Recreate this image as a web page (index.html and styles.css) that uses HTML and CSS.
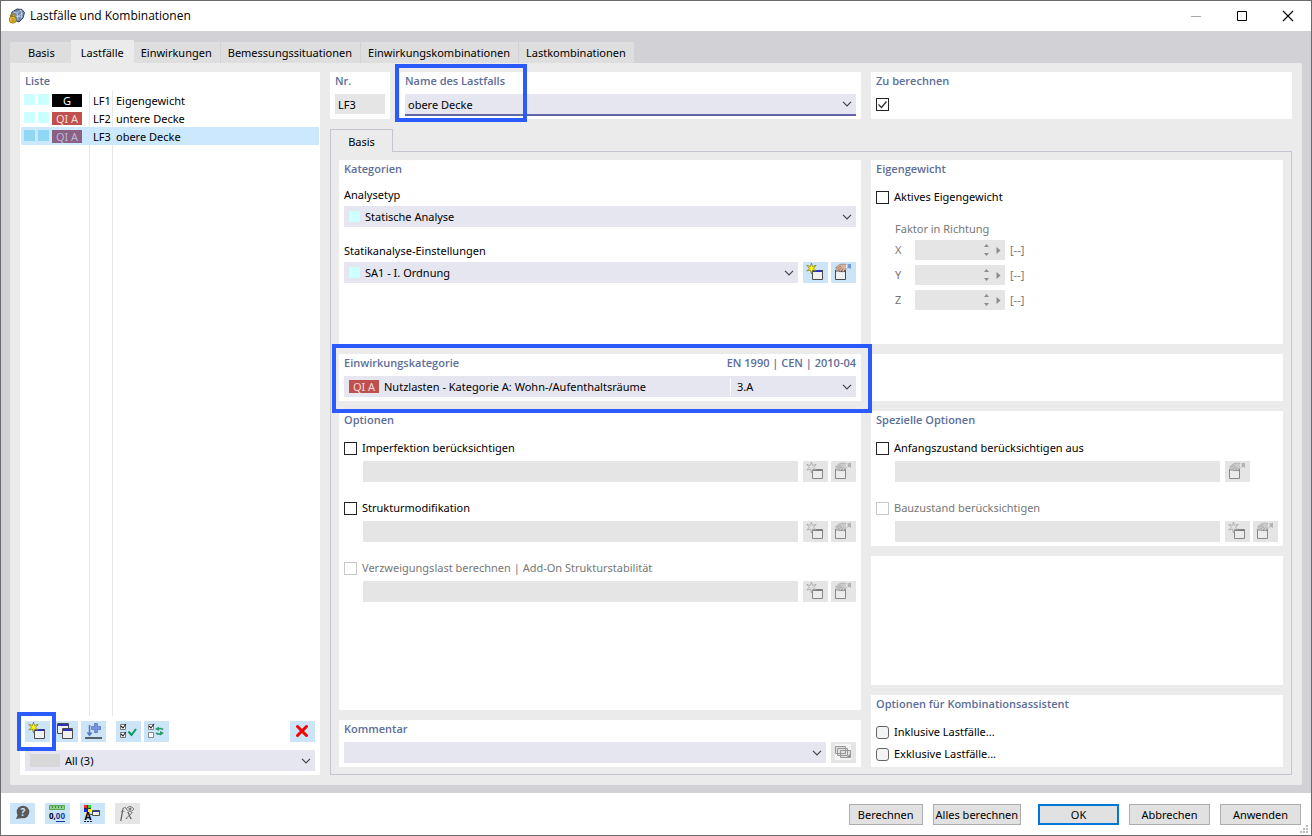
FILE: index.html
```html
<!DOCTYPE html>
<html lang="de">
<head>
    <meta charset="UTF-8">
    <meta name="viewport" content="width=device-width, initial-scale=1.0">
    <title>Lastfälle und Kombinationen</title>
    <link rel="stylesheet" href="styles.css">
</head>
<body>
    <!-- Shared icons -->
    <svg class="sprite" aria-hidden="true">
        <symbol id="i-chevron" viewBox="0 0 10 6"><path d="M1 .8l4 4 4-4" fill="none" stroke="#444" stroke-width="1.2"/></symbol>
        <symbol id="i-new" viewBox="0 0 25 21">
            <path d="M9.500 8.500h10v9h-10z" fill="#f0f0f0" stroke="#4a4a4a"/>
            <path d="M10 8h9v2h-9z" fill="#2c35b5"/>
            <path d="M9 8h1v2H9zM19 8h1v2h-1z" fill="#4a4a4a"/>
            <path d="M8.500 1l1 3.500 3.700-1.200-2.500 3 2.500 2.700-3.700-.9-1 3.900-1.100-3.900-3.600.9L6.300 6.300 3.800 3.300l3.600 1.200z" fill="#fff200" stroke="#77771c" stroke-width=".7"/>
        </symbol>
        <symbol id="i-edit" viewBox="0 0 25 21">
            <path d="M4.500 8.500h10v9h-10z" fill="#f0f0f0" stroke="#4a4a4a"/>
            <path d="M4 8h11v2H4z" fill="#4a4a4a"/>
            <path d="M5 8.500h3v1H5z" fill="#fff"/>
            <path d="M4.500 6L7 3.500l3-1.300h4l2 .8v3.500L14 7.500l-1 2-1.500.5L11 8l-1.500 1.800L8 9V7.500L6 8.500l-1-1 1.500-1.500z" fill="#d9b49b" stroke="#8a6a58" stroke-width=".6"/>
            <path d="M7 5.500L10 4.500M8 7.500l3-1.500M11 8l1.500-1.500" stroke="#8a6a58" stroke-width=".7"/>
            <path d="M15.500 2.500L20 1.800v5.200l-1.500-1-3 .5z" fill="#6f9ad3"/>
            <path d="M15 2.500h1.500v4H15z" fill="#e9f0fa"/>
        </symbol>
        <symbol id="i-spin" viewBox="0 0 20 20"><path d="M4.500 4L7 7H2zM4.500 16L7 13H2zM14.500 7l4 3.500-4 3.500z" fill="#8c8c8c"/></symbol>
    </svg>

    <div class="window">
        <header class="titlebar">
            <svg class="app-icon" viewBox="0 0 16 16" aria-hidden="true">
                <path d="M3 4l5-3 5 .5 2.500 3L14 10l-4 4-5-2-3-4z" fill="#6d86ad" stroke="#33445f"/>
                <path d="M4 4l4 1 4-3M8 5l1 7M9 8l5-3M4 7l4 1.500 5 .5M12 2l1 8" fill="none" stroke="#d3deed" stroke-width=".8"/>
                <path d="M1.500 9V7.500q2-3 4.500 0V9" fill="none" stroke="#a88511" stroke-width="1.300"/>
                <rect x=".5" y="8.500" width="6.500" height="6.500" rx="2.500" fill="#e7bd33" stroke="#8d6d10" stroke-width=".8"/>
                <path d="M2.500 11h3M2.500 13h3" stroke="#8d6d10" stroke-width=".8"/>
            </svg>
            <h1>Lastfälle und Kombinationen</h1>
            <div class="window-buttons">
                <button type="button" aria-label="Minimieren" disabled><svg viewBox="0 0 12 12"><path d="M1 6.500h10" stroke="#aaa"/></svg></button>
                <button type="button" aria-label="Maximieren"><svg viewBox="0 0 12 12"><path d="M1.500 1.500h9v9h-9z" fill="none" stroke="#000"/></svg></button>
                <button type="button" aria-label="Schließen"><svg viewBox="0 0 12 12"><path d="M1 1l10 10M11 1L1 11" stroke="#000" stroke-width="1.100"/></svg></button>
            </div>
        </header>

        <div class="workspace">
            <nav class="tabs" role="tablist">
                <button type="button" role="tab">Basis</button>
                <button type="button" role="tab" class="active" aria-selected="true">Lastfälle</button>
                <button type="button" role="tab">Einwirkungen</button>
                <button type="button" role="tab">Bemessungssituationen</button>
                <button type="button" role="tab">Einwirkungskombinationen</button>
                <button type="button" role="tab">Lastkombinationen</button>
            </nav>

            <div class="page">
                <!-- Load case list -->
                <section class="panel list-panel">
                    <h2>Liste</h2>
                    <div class="list-area">
                        <table class="list">
                            <tr>
                                <td class="marks"><div><i class="swatch"></i><i class="swatch"></i><span class="badge black">G</span></div></td>
                                <td class="number">LF1</td>
                                <td>Eigengewicht</td>
                            </tr>
                            <tr>
                                <td class="marks"><div><i class="swatch"></i><i class="swatch"></i><span class="badge">QI A</span></div></td>
                                <td class="number">LF2</td>
                                <td>untere Decke</td>
                            </tr>
                            <tr class="selected">
                                <td class="marks"><div><i class="swatch"></i><i class="swatch"></i><span class="badge">QI A</span></div></td>
                                <td class="number">LF3</td>
                                <td>obere Decke</td>
                            </tr>
                        </table>
                    </div>
                    <div class="list-tools">
                        <div class="marked mark-new">
                            <button type="button" class="tool" aria-label="Neu"><svg><use href="#i-new"/></svg></button>
                        </div>
                        <button type="button" class="tool" aria-label="Kopieren">
                            <svg viewBox="0 0 25 21"><path d="M4.500 2.500h11v10h-11z" fill="#f0f0f0" stroke="#4a4a4a"/><path d="M5 3h10v2H5z" fill="#2c35b5"/><path d="M9.500 7.500h10v10h-10z" fill="#f0f0f0" stroke="#4a4a4a"/><path d="M10 8h9v2h-9z" fill="#2c35b5"/></svg>
                        </button>
                        <button type="button" class="tool" aria-label="Importieren">
                            <svg viewBox="0 0 25 21"><path d="M4 17h17" stroke="#333" stroke-width="1.500"/><path d="M8.500 4v9" stroke="#5278bd" stroke-width="1.500"/><path d="M5.500 11.500h6l-3 4z" fill="#5278bd"/><path d="M13.500 2.500h3v3h3v3h-3v3h-3v-3h-3v-3h3z" fill="#7793df" stroke="#506dbd" stroke-width=".7"/></svg>
                        </button>
                        <button type="button" class="tool spaced" aria-label="Alle auswählen">
                            <svg viewBox="0 0 25 21"><path d="M4.500 3.500h5v5h-5zM4.500 11.500h5v5h-5z" fill="#fff" stroke="#777"/><path d="M5 5l2 2 3-4M5 13l2 2 3-4" fill="none" stroke="#222" stroke-width="1.100"/><path d="M12.500 10.500l3 3.500 4.500-6" fill="none" stroke="#079c53" stroke-width="2"/></svg>
                        </button>
                        <button type="button" class="tool" aria-label="Auswahl umkehren">
                            <svg viewBox="0 0 25 21"><path d="M4.500 3.500h5v5h-5zM4.500 11.500h5v5h-5z" fill="#fff" stroke="#888"/><path d="M5 5l2 2 3-4" fill="none" stroke="#222" stroke-width="1.100"/><path d="M19 8.500q-3-2-5.500 0M12 12q3 2 5.500.5" fill="none" stroke="#269b68" stroke-width="1.700"/><path d="M11 8l4-2.500v4.500zM20 12l-4-2v4.500z" fill="#269b68"/></svg>
                        </button>
                        <button type="button" class="tool delete" aria-label="Löschen">
                            <svg viewBox="0 0 25 21"><path d="M7.500 5.500l9 9M16.500 5.500l-9 9" stroke="#f40000" stroke-width="3" stroke-linecap="round"/></svg>
                        </button>
                    </div>
                    <div class="combo">
                        <i class="blank"></i>
                        <select aria-label="Filter"><option>All (3)</option></select>
                        <svg class="chevron"><use href="#i-chevron"/></svg>
                    </div>
                </section>

                <main class="details">
                    <div class="top-row">
                        <section class="panel">
                            <h2><label for="nr">Nr.</label></h2>
                            <input id="nr" class="field number-field" value="LF3" readonly>
                        </section>
                        <section class="panel">
                            <div class="marked mark-name"><h2><label for="name">Name des Lastfalls</label></h2></div>
                            <div class="combo focused">
                                <input id="name" value="obere Decke">
                                <svg class="chevron"><use href="#i-chevron"/></svg>
                            </div>
                        </section>
                        <section class="panel">
                            <h2>Zu berechnen</h2>
                            <div class="check"><input type="checkbox" aria-label="Zu berechnen" checked></div>
                        </section>
                    </div>

                    <button type="button" role="tab" class="sub-tab">Basis</button>
                    <div class="sub-page">
                        <div class="column">
                            <section class="panel categories">
                                <h2>Kategorien</h2>
                                <label class="caption" for="type">Analysetyp</label>
                                <div class="combo">
                                    <i class="swatch"></i>
                                    <select id="type"><option>Statische Analyse</option></select>
                                    <svg class="chevron"><use href="#i-chevron"/></svg>
                                </div>
                                <label class="caption second" for="settings">Statikanalyse-Einstellungen</label>
                                <div class="field-row">
                                    <div class="combo">
                                        <i class="swatch"></i>
                                        <select id="settings"><option>SA1 - I. Ordnung</option></select>
                                        <svg class="chevron"><use href="#i-chevron"/></svg>
                                    </div>
                                    <button type="button" class="tool" aria-label="Neu"><svg><use href="#i-new"/></svg></button>
                                    <button type="button" class="tool" aria-label="Bearbeiten"><svg><use href="#i-edit"/></svg></button>
                                </div>
                            </section>

                            <section class="panel short marked mark-action">
                                <h2 class="split"><label for="action">Einwirkungskategorie</label><span>EN 1990 | CEN | 2010-04</span></h2>
                                <div class="combo">
                                    <span class="badge">QI A</span>
                                    <select id="action"><option>Nutzlasten - Kategorie A: Wohn-/Aufenthaltsräume</option></select>
                                    <span class="code">3.A</span>
                                    <svg class="chevron"><use href="#i-chevron"/></svg>
                                </div>
                            </section>

                            <section class="panel grow">
                                <h2>Optionen</h2>
                                <div class="option">
                                    <label class="check"><input type="checkbox">Imperfektion berücksichtigen</label>
                                    <div class="field-row">
                                        <input class="field" aria-label="Imperfektion" disabled>
                                        <button type="button" class="tool" aria-label="Neu" disabled><svg><use href="#i-new"/></svg></button>
                                        <button type="button" class="tool" aria-label="Bearbeiten" disabled><svg><use href="#i-edit"/></svg></button>
                                    </div>
                                </div>
                                <div class="option">
                                    <label class="check"><input type="checkbox">Strukturmodifikation</label>
                                    <div class="field-row">
                                        <input class="field" aria-label="Strukturmodifikation" disabled>
                                        <button type="button" class="tool" aria-label="Neu" disabled><svg><use href="#i-new"/></svg></button>
                                        <button type="button" class="tool" aria-label="Bearbeiten" disabled><svg><use href="#i-edit"/></svg></button>
                                    </div>
                                </div>
                                <div class="option">
                                    <label class="check muted"><input type="checkbox" disabled>Verzweigungslast berechnen | Add-On Strukturstabilität</label>
                                    <div class="field-row">
                                        <input class="field" aria-label="Verzweigungslast" disabled>
                                        <button type="button" class="tool" aria-label="Neu" disabled><svg><use href="#i-new"/></svg></button>
                                        <button type="button" class="tool" aria-label="Bearbeiten" disabled><svg><use href="#i-edit"/></svg></button>
                                    </div>
                                </div>
                            </section>

                            <section class="panel">
                                <h2><label for="comment">Kommentar</label></h2>
                                <div class="field-row">
                                    <div class="combo">
                                        <input id="comment">
                                        <svg class="chevron"><use href="#i-chevron"/></svg>
                                    </div>
                                    <button type="button" class="tool" aria-label="Kommentare" disabled>
                                        <svg viewBox="0 0 25 21"><path d="M4 2h16v16H4z" fill="#fff"/><path d="M4.500 4.500h10v7h-10zM6.500 6.500h10v7h-10zM9.500 8.500h10v7h-10z" fill="#ddd" stroke="#666"/><path d="M16 15l3-3v3z" fill="#555"/></svg>
                                    </button>
                                </div>
                            </section>
                        </div>

                        <div class="column">
                            <section class="panel categories">
                                <h2>Eigengewicht</h2>
                                <label class="check first"><input type="checkbox">Aktives Eigengewicht</label>
                                <div class="factors">
                                    <p>Faktor in Richtung</p>
                                    <div class="factor"><label for="fx">X</label><span class="spinner"><input id="fx" disabled><svg><use href="#i-spin"/></svg></span><span>[--]</span></div>
                                    <div class="factor"><label for="fy">Y</label><span class="spinner"><input id="fy" disabled><svg><use href="#i-spin"/></svg></span><span>[--]</span></div>
                                    <div class="factor"><label for="fz">Z</label><span class="spinner"><input id="fz" disabled><svg><use href="#i-spin"/></svg></span><span>[--]</span></div>
                                </div>
                            </section>

                            <section class="panel short"></section>

                            <section class="panel">
                                <h2>Spezielle Optionen</h2>
                                <div class="option">
                                    <label class="check"><input type="checkbox">Anfangszustand berücksichtigen aus</label>
                                    <div class="field-row">
                                        <input class="field" aria-label="Anfangszustand" disabled>
                                        <button type="button" class="tool" aria-label="Bearbeiten" disabled><svg><use href="#i-edit"/></svg></button>
                                        <i class="tool-gap"></i>
                                    </div>
                                </div>
                                <div class="option">
                                    <label class="check muted"><input type="checkbox" disabled>Bauzustand berücksichtigen</label>
                                    <div class="field-row">
                                        <input class="field" aria-label="Bauzustand" disabled>
                                        <button type="button" class="tool" aria-label="Neu" disabled><svg><use href="#i-new"/></svg></button>
                                        <button type="button" class="tool" aria-label="Bearbeiten" disabled><svg><use href="#i-edit"/></svg></button>
                                    </div>
                                </div>
                            </section>

                            <section class="panel grow"></section>

                            <section class="panel">
                                <h2>Optionen für Kombinationsassistent</h2>
                                <div class="assistant">
                                    <label class="check round"><input type="checkbox">Inklusive Lastfälle...</label>
                                    <label class="check round"><input type="checkbox">Exklusive Lastfälle...</label>
                                </div>
                            </section>
                        </div>
                    </div>
                </main>
            </div>
        </div>

        <footer class="footer">
            <button type="button" class="tool" aria-label="Hilfe">
                <svg viewBox="0 0 25 21"><circle cx="13" cy="9" r="6.300" fill="#595959"/><path d="M8 11l-2 5 6-1z" fill="#595959"/><text x="13" y="13" text-anchor="middle" class="icon-help">?</text></svg>
            </button>
            <button type="button" class="tool" aria-label="Einheiten und Dezimalstellen">
                <svg viewBox="0 0 25 21"><path d="M4.500 2.500h15v4h-15z" fill="#8fd18b" stroke="#58a858"/><path d="M7.500 3v2M10.500 3v2M13.500 3v2M16.500 3v2" stroke="#3f843f"/><text x="4" y="16" class="icon-digits">0,<tspan class="blue">00</tspan></text><path d="M11 18.500h9" stroke="#1d3a9d"/></svg>
            </button>
            <button type="button" class="tool" aria-label="Anzeige">
                <svg viewBox="0 0 25 21"><path d="M4 2h7v7H4z" fill="#333"/><path d="M4 2h3v3H4z" fill="#f22"/><path d="M8 2h3v3H8z" fill="#2d2"/><path d="M4 6h3v3H4z" fill="#22f"/><path d="M8 6h3v3H8z" fill="#ff0"/><text x="8" y="17" text-anchor="middle" class="icon-letter">A</text><path d="M4 18.500h8" stroke="#222" stroke-dasharray="2 1"/><path d="M12.500 7.500h7v5h-7z" fill="#f0f0f0" stroke="#4a4a4a"/><path d="M13 8h6v1h-6z" fill="#2c35b5"/><path d="M10 11.500h2" stroke="#555"/></svg>
            </button>
            <button type="button" class="tool" aria-label="Formel" disabled>
                <svg viewBox="0 0 25 21"><text x="5" y="15" class="icon-formula">f</text><text x="11" y="16" class="icon-formula">x</text><path d="M11 6q4-5 8 0-4 5-8 0z" fill="#eee" stroke="#333"/><circle cx="15" cy="6" r="1.500" fill="#333"/></svg>
            </button>
            <div class="actions">
                <button type="button">Berechnen</button>
                <button type="button" class="tight">Alles berechnen</button>
                <button type="button" class="wide primary">OK</button>
                <button type="button" class="wide">Abbrechen</button>
                <button type="button" class="wide">Anwenden</button>
            </div>
            <svg class="grip" viewBox="0 0 8 8" aria-hidden="true"><path d="M6 0h2v2H6zM3 3h2v2H3zM6 3h2v2H6zM0 6h2v2H0zM3 6h2v2H3zM6 6h2v2H6z" fill="#bbb"/></svg>
        </footer>
    </div>
</body>
</html>
```

FILE: styles.css
```css
* {
    margin: 0;
    padding: 0;
    box-sizing: border-box;
}
body {
    font-family: "Noto Sans", "Open Sans", sans-serif;
    font-size: 11px;
    line-height: 18px;
    color: #000;
    background: #fff;
}
button, input, select {
    font: inherit;
    color: inherit;
    border: none;
    border-radius: 0;
    background: none;
    appearance: none;
}
button {
    white-space: nowrap;
}
.sprite {
    display: none;
}
.window {
    display: flex;
    flex-direction: column;
    min-height: 100vh;
    border: 1px solid #6b6b6b;
}

/* Title bar */
.titlebar {
    display: flex;
    align-items: center;
    height: 30px;
    padding-left: 8px;
}
.app-icon {
    width: 16px;
    height: 16px;
    margin-right: 5px;
}
.titlebar h1 {
    font-family: "Open Sans", sans-serif;
    font-size: 12px;
    font-weight: normal;
}
.window-buttons {
    display: flex;
    margin-left: auto;
}
.window-buttons button {
    display: grid;
    place-items: center;
    width: 46px;
    height: 30px;
}
.window-buttons svg {
    width: 12px;
    height: 12px;
}

/* Main tabs */
.workspace {
    flex: 1;
    display: flex;
    flex-direction: column;
    padding: 9px 9px 8px;
    background: #d2d1d6;
}
.tabs {
    display: flex;
    align-items: flex-end;
}
.tabs button {
    height: 21px;
    padding: 0 8px 0 7px;
    background: #dedede;
    border-right: 1px solid #d2d1d6;
}
.tabs button:first-child {
    padding: 0 16px 0 18px;
    border: none;
}
.tabs button:last-child {
    border: none;
}
.tabs .active {
    height: 23px;
    padding: 2px 10px 0;
    background: #ebebeb;
    border: none;
}
.page {
    flex: 1;
    display: grid;
    grid-template-columns: 300px minmax(0, 1fr);
    gap: 10px;
    padding: 9px 10px 10px;
    background: #ebebeb;
}

/* Panels */
.panel {
    padding: 0 5px 4px;
    background: #fff;
}
.panel h2 {
    height: 18px;
    margin-bottom: 4px;
    font-family: "Open Sans", sans-serif;
    font-size: 11px;
    font-weight: 600;
    color: #5d6e98;
}
.panel .split {
    display: flex;
    justify-content: space-between;
}
.grow {
    flex: 1;
}
.short {
    min-height: 47px;
}

/* Blue frames around the steps of interest */
.marked {
    position: relative;
}
.marked::after {
    content: "";
    position: absolute;
    z-index: 2;
    box-sizing: border-box;
    border: 4px solid #2b5bff;
    pointer-events: none;
}
.mark-name::after {
    top: -8px;
    left: -10px;
    width: 132px;
    height: 58px;
}
.mark-action::after {
    inset: -10px -11px -12px -7px;
}
.mark-new::after {
    inset: -9px -6px -9px -8px;
}

/* List */
.list-panel {
    display: flex;
    flex-direction: column;
    padding: 0 5px 4px;
}
.list-panel h2 {
    margin-bottom: 1px;
}
.list-area {
    flex: 1;
    margin: 0 -4px 5px;
    background:
        linear-gradient(#e8e8e8, #e8e8e8) 68px 0 / 1px 100% no-repeat,
        linear-gradient(#e8e8e8, #e8e8e8) 91px 0 / 1px 100% no-repeat;
}
.list {
    width: 100%;
    border-collapse: collapse;
}
.list td {
    height: 18px;
    padding-left: 3px;
    padding-top: 1px;
    line-height: 17px;
}
.list .marks {
    width: 69px;
    padding: 0 0 0 3px;
}
.marks div {
    display: flex;
    gap: 3px;
}
.list .number {
    width: 23px;
}
.swatch {
    flex: none;
    width: 11px;
    height: 11px;
    background: #ccffff;
}
.badge {
    flex: none;
    width: 30px;
    height: 13px;
    line-height: 13px;
    text-align: center;
    color: #f3dddd;
    background: #c0504d;
}
.black {
    color: #fff;
    background: #000;
}
.selected {
    background: #cce8ff;
}
.selected .swatch {
    background: #90d6f5;
}
.selected .badge {
    color: #b5b8dc;
    background: #8b6080;
}
.list-tools {
    display: flex;
    gap: 3px;
    margin-bottom: 8px;
}
.list-tools .spaced {
    margin-left: 7px;
}
.list-tools .delete {
    margin-left: auto;
}
.blank {
    width: 30px;
    height: 13px;
    background: #d8d8d8;
}

/* Fields and buttons */
.tool {
    flex: none;
    display: block;
    width: 25px;
    height: 21px;
    background: #cce4f7;
}
.tool svg {
    display: block;
    width: 25px;
    height: 21px;
}
.tool:disabled {
    background: #e5e5e5;
}
.tool:disabled svg {
    filter: grayscale(1);
    opacity: 0.6;
}
.tool-gap {
    width: 25px;
}
.combo {
    flex: 1;
    display: flex;
    align-items: center;
    height: 21px;
    padding: 0 4px 0 5px;
    background: #e6e6f1;
}
.list-panel .combo {
    flex: none;
}
.combo select, .combo input {
    flex: 1;
    min-width: 0;
    height: 21px;
    padding-left: 5px;
    outline: none;
}
.combo input {
    padding-left: 0;
}
.combo .chevron {
    flex: none;
    width: 10px;
    height: 6px;
    pointer-events: none;
}
.focused {
    height: 22px;
    padding-left: 3px;
    border-bottom: 2px solid #6464aa;
}
.focused input {
    height: 20px;
}
.code {
    width: 112px;
    padding-left: 6px;
    border-left: 1px solid #fff;
}
.field {
    display: block;
    flex: 1;
    width: 100%;
    min-width: 0;
    height: 21px;
    background: #e5e5e5;
}
.number-field {
    height: 20px;
    padding: 1px 3px 0;
}
.field-row {
    display: flex;
    gap: 3px;
}
.field-row > :first-child {
    margin-right: 2px;
}
.check {
    display: flex;
    align-items: center;
    gap: 5px;
    height: 18px;
}
.check input {
    width: 13px;
    height: 13px;
    border: 1px solid #222;
    background: #fff;
}
.check input:checked {
    background: url("data:image/svg+xml,%3Csvg xmlns='http://www.w3.org/2000/svg' viewBox='0 0 11 11'%3E%3Cpath d='M1.5 5.500l3 3 5-6' fill='none' stroke='%23333' stroke-width='1.300'/%3E%3C/svg%3E") center no-repeat;
}
.check input:disabled {
    border-color: #c8c8c8;
}
.round input {
    border-color: #666;
    border-radius: 3px;
    background: #f3f3f3;
}
.muted {
    color: #777;
}

/* Load case details */
.details {
    display: flex;
    flex-direction: column;
}
.top-row {
    display: grid;
    grid-template-columns: 60px minmax(0, 1fr) 421px;
    gap: 10px;
    min-height: 47px;
}
.top-row .panel {
    padding-bottom: 3px;
}
.top-row .check {
    height: 20px;
}
.sub-tab {
    z-index: 1;
    width: 63px;
    height: 23px;
    margin: 10px 0 -1px;
    padding-top: 2px;
    border: 1px solid #c5c4d0;
    border-bottom: none;
    background: #ebebeb;
}
.sub-page {
    flex: 1;
    display: grid;
    grid-template-columns: minmax(0, 1fr) 412px;
    gap: 10px;
    padding: 8px 8px 7px;
    border: 1px solid #c5c4d0;
}
.column {
    display: flex;
    flex-direction: column;
    gap: 10px;
}
.categories {
    min-height: 184px;
}
.caption {
    display: block;
    margin: 8px 0 2px;
}
.categories h2 {
    margin-bottom: 8px;
}
.second {
    margin-top: 15px;
}
.option {
    margin-top: 17px;
}
h2 + .option {
    margin-top: 10px;
}
.option .check {
    margin-bottom: 4px;
}
.option .field-row {
    padding-left: 19px;
}
.first {
    margin-top: 10px;
}
.factors {
    padding: 14px 0 0 19px;
    color: #777;
}
.factors p {
    margin-bottom: 2px;
}
.factor {
    display: flex;
    align-items: center;
    gap: 5px;
    height: 20px;
    margin-bottom: 5px;
}
.factor label {
    width: 15px;
}
.spinner {
    display: flex;
    width: 90px;
    height: 20px;
    background: #e5e5e5;
}
.spinner input {
    flex: 1;
    min-width: 0;
}
.spinner svg {
    width: 20px;
    height: 20px;
    margin-right: 3px;
}
.assistant {
    display: grid;
    gap: 4px;
    margin-top: 10px;
}

/* Footer */
.footer {
    position: relative;
    display: flex;
    gap: 10px;
    height: 42px;
    padding: 10px 10px 0 9px;
}
.actions {
    display: flex;
    gap: 10px;
    margin: 1px 0 0 auto;
}
.actions button {
    height: 21px;
    padding: 0 8px;
    line-height: 19px;
    border: 1px solid #adadad;
    background: #e1e1e1;
}
.actions .tight {
    padding: 0 2px;
}
.actions .wide {
    width: 81px;
    padding: 0;
}
.actions .primary {
    margin-left: 7px;
    line-height: 17px;
    border: 2px solid #0078d7;
}
.grip {
    position: absolute;
    right: 3px;
    bottom: 2px;
    width: 8px;
    height: 8px;
}
.icon-help {
    font-size: 10px;
    font-weight: bold;
    fill: #cce4f7;
}
.icon-digits {
    font-size: 8px;
    font-weight: bold;
}
.icon-digits .blue {
    fill: #1d3a9d;
}
.icon-letter {
    font-size: 10px;
    font-weight: bold;
}
.icon-formula {
    font-family: "Liberation Serif", serif;
    font-size: 15px;
    font-style: italic;
}
```
